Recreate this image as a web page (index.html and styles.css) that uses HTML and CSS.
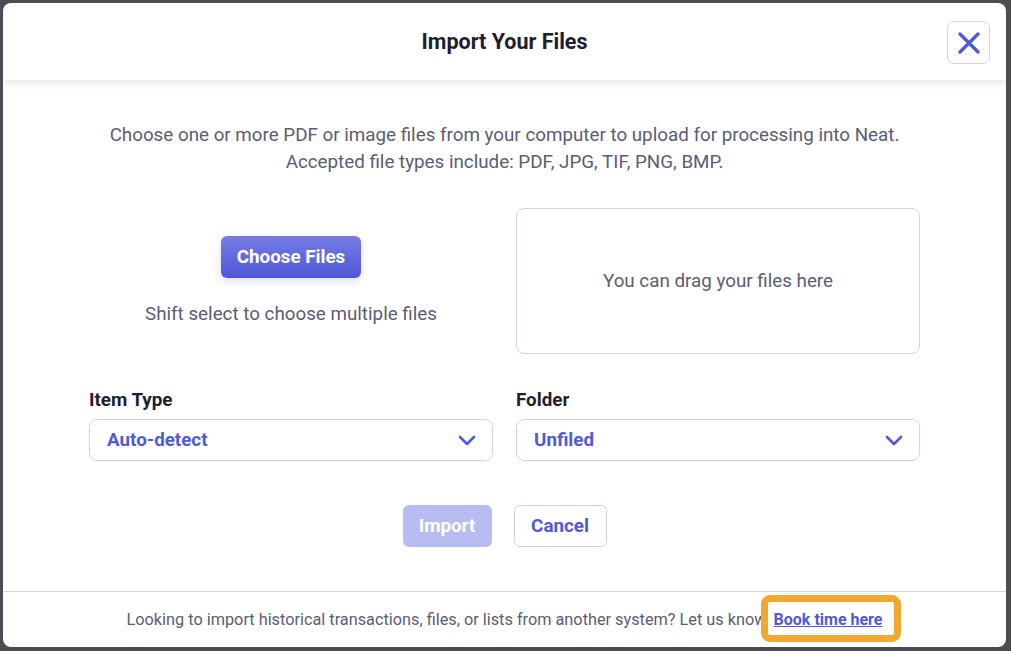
FILE: index.html
```html
<!DOCTYPE html>
<html lang="en">
<head>
  <meta charset="UTF-8">
  <meta name="viewport" content="width=device-width, initial-scale=1.0">
  <title>Import Your Files</title>
  <link rel="stylesheet" href="styles.css">
</head>
<body>
  <div class="modal">
    <div class="modal-header">
      <h1 class="modal-title">Import Your Files</h1>
      <button class="close-btn" aria-label="Close">
        <svg width="22" height="22" viewBox="0 0 22 22">
          <path d="M2 2 L20 20 M20 2 L2 20" stroke="#4f5ad8" stroke-width="3.4" stroke-linecap="round" fill="none"/>
        </svg>
      </button>
    </div>

    <div class="modal-body">
      <p class="intro">
        Choose one or more PDF or image files from your computer to upload for processing into Neat.<br>
        Accepted file types include: PDF, JPG, TIF, PNG, BMP.
      </p>

      <div class="upload-row">
        <div class="picker">
          <button class="choose-btn">Choose Files</button>
          <p class="hint">Shift select to choose multiple files</p>
        </div>
        <div class="drop-zone">You can drag your files here</div>
      </div>

      <div class="fields-row">
        <div class="field">
          <label class="field-label">Item Type</label>
          <div class="select">
            <span>Auto-detect</span>
            <svg width="18" height="11" viewBox="0 0 18 11">
              <path d="M2 2 L9 9 L16 2" stroke="#4f5ad8" stroke-width="2.6" stroke-linecap="round" stroke-linejoin="round" fill="none"/>
            </svg>
          </div>
        </div>
        <div class="field">
          <label class="field-label">Folder</label>
          <div class="select">
            <span>Unfiled</span>
            <svg width="18" height="11" viewBox="0 0 18 11">
              <path d="M2 2 L9 9 L16 2" stroke="#4f5ad8" stroke-width="2.6" stroke-linecap="round" stroke-linejoin="round" fill="none"/>
            </svg>
          </div>
        </div>
      </div>

      <div class="actions">
        <button class="import-btn" disabled>Import</button>
        <button class="cancel-btn">Cancel</button>
      </div>
    </div>

    <div class="modal-footer">
      <p class="footer-text">Looking to import historical transactions, files, or lists from another system? Let us know <a class="book-link" href="#">Book time here</a></p>
    </div>
  </div>
</body>
</html>
```

FILE: styles.css
```css
body {
  margin: 0;
  background-color: #4a4d51;
  font-family: Roboto, "Liberation Sans", sans-serif;
  height: 651px;
  overflow: hidden;
}

.modal {
  margin: 3px 5px 4px 3px;
  height: 644px;
  background: #fff;
  border-radius: 8px;
  display: flex;
  flex-direction: column;
  overflow: hidden;
}

.modal-header {
  height: 77px;
  flex-shrink: 0;
  display: flex;
  align-items: center;
  justify-content: center;
  position: relative;
  box-shadow: 0 2px 8px rgba(0, 0, 0, 0.12);
  z-index: 1;
}

.modal-title {
  margin: 0;
  font-size: 21.5px;
  font-weight: 700;
  color: #1e1e30;
}

.close-btn {
  position: absolute;
  right: 16px;
  top: 18px;
  width: 43px;
  height: 43px;
  border: 1px solid #d3d3ef;
  border-radius: 7px;
  background: #fff;
  display: flex;
  align-items: center;
  justify-content: center;
  padding: 0;
  cursor: pointer;
}

.modal-body {
  flex: 1;
  padding: 42px 86px 0 86px;
}

.intro {
  margin: 0;
  text-align: center;
  font-size: 18.8px;
  line-height: 27px;
  color: #5c5c74;
}

.upload-row {
  display: grid;
  grid-template-columns: 1fr 1fr;
  gap: 23px;
  margin-top: 32px;
}

.picker {
  display: flex;
  flex-direction: column;
  align-items: center;
  justify-content: center;
}

.choose-btn {
  width: 140px;
  height: 42px;
  border: none;
  border-radius: 6px;
  background: linear-gradient(#767de3, #4f57d7);
  color: #fff;
  font-family: inherit;
  font-size: 18.8px;
  font-weight: 700;
  box-shadow: 0 3px 8px rgba(80, 88, 216, 0.2);
  cursor: pointer;
}

.hint {
  margin: 24px 0 0;
  font-size: 18.8px;
  line-height: 24px;
  color: #5c5c74;
}

.drop-zone {
  height: 146px;
  box-sizing: border-box;
  border: 1px solid #d4d4e4;
  border-radius: 8px;
  display: flex;
  align-items: center;
  justify-content: center;
  font-size: 18.8px;
  color: #5c5c74;
}

.fields-row {
  display: grid;
  grid-template-columns: 1fr 1fr;
  gap: 23px;
  margin-top: 35px;
}

.field-label {
  display: block;
  font-size: 18.8px;
  font-weight: 700;
  line-height: 22px;
  color: #1e1e30;
  margin-bottom: 8px;
}

.select {
  height: 42px;
  box-sizing: border-box;
  border: 1px solid #d3d3ef;
  border-radius: 8px;
  display: flex;
  align-items: center;
  justify-content: space-between;
  padding: 0 16px 0 17px;
  font-size: 18.8px;
  font-weight: 700;
  color: #4f5ad8;
  box-shadow: 0 1px 3px rgba(0, 0, 0, 0.05);
}

.actions {
  display: flex;
  justify-content: center;
  gap: 22px;
  margin-top: 44px;
}

.import-btn,
.cancel-btn {
  height: 42px;
  border-radius: 6px;
  font-family: inherit;
  font-size: 18.8px;
  font-weight: 700;
}

.import-btn {
  width: 89px;
  border: none;
  background: #b8bcf1;
  color: #fff;
}

.cancel-btn {
  width: 93px;
  background: #fff;
  border: 1px solid #cfd0ef;
  color: #4f5ad8;
  cursor: pointer;
}

.modal-footer {
  height: 56px;
  flex-shrink: 0;
  box-sizing: border-box;
  border-top: 1px solid #d6d6e2;
  display: flex;
  align-items: center;
  justify-content: center;
}

.footer-text {
  margin: 0;
  font-size: 16.3px;
  color: #5c5c74;
  white-space: nowrap;
}

.book-link {
  position: relative;
  margin-left: 3px;
  font-size: 16px;
  font-weight: 700;
  color: #4f5ad8;
}

/* orange highlight drawn round the link */
.book-link::after {
  content: "";
  position: absolute;
  left: -13px;
  right: -19px;
  top: -15px;
  bottom: -13px;
  border: 7px solid #f0a830;
  border-radius: 9px;
}
```
